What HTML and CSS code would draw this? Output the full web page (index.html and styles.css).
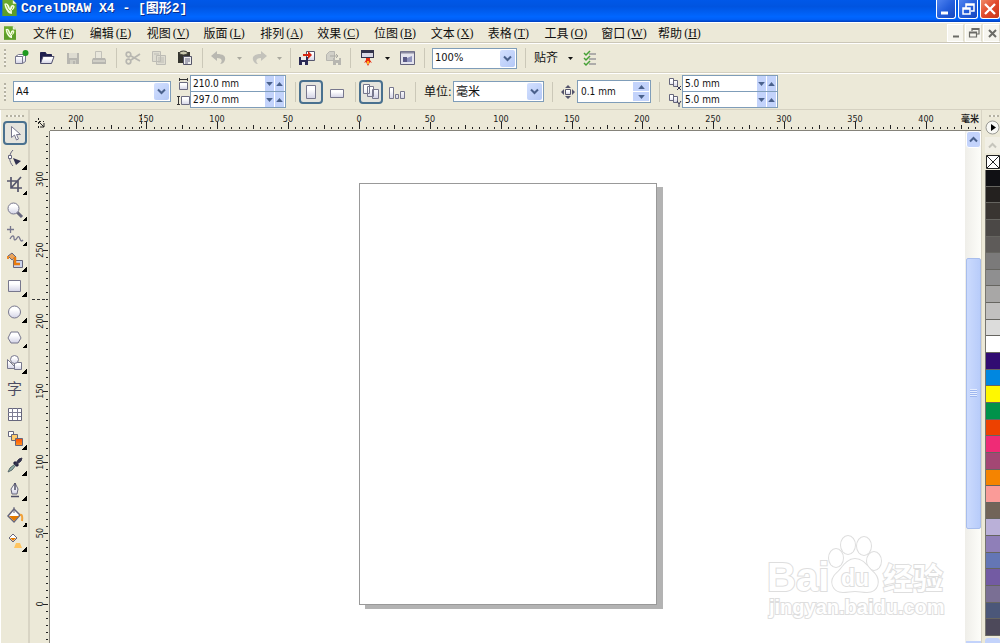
FILE: index.html
```html
<!DOCTYPE html>
<html lang="zh-CN">
<head>
<meta charset="utf-8">
<title>CorelDRAW X4 - [图形2]</title>
<link rel="stylesheet" href="styles.css">
</head>
<body>
<svg class="defs" aria-hidden="true">
  <defs>
    <linearGradient id="pale" x1="0" y1="0" x2="0" y2="1"><stop offset=".3" stop-color="#fff"/><stop offset="1" stop-color="#d3d3e6"/></linearGradient>
    <linearGradient id="hot" x1="0" y1="0" x2="0" y2="1"><stop offset="0" stop-color="#ff4a00"/><stop offset="1" stop-color="#ff9420"/></linearGradient>
    <symbol id="down" viewBox="0 0 9 9"><path d="M1 2.500 4.500 6 8 2.500" fill="none" stroke="#4a618c" stroke-width="2"/></symbol>
    <symbol id="tri" viewBox="0 0 5 3"><path d="M0 0h5L2.500 3z" fill="currentColor"/></symbol>
    <symbol id="triup" viewBox="0 0 5 3"><path d="M0 3h5L2.500 0z" fill="currentColor"/></symbol>
    <symbol id="logo" viewBox="0 0 15 17"><path d="M0 0h11l4 4v13H0z" fill="#6aa92c"/><path d="M0 9h15v8H0z" fill="#4f9426" opacity=".5"/><path d="M11 0l4 4h-4z" fill="#f1f5e6"/><path d="M2 4q3-2 5 2l1 3 1-3q3-2 4 1-1 4-3 4v4l-3-1q-4-3-5-10z" fill="#f7ffe8"/><path d="M4 5q1 4 4 7M11 7q0 2-2 4" fill="none" stroke="#86b735"/></symbol>
  </defs>
</svg>
<div class="app">
  <header class="titlebar">
    <svg class="title-logo"><use href="#logo"/></svg>
    <h1>CorelDRAW X4 - [图形2]</h1>
    <div class="window-buttons">
      <button aria-label="最小化"><svg width="18" height="18"><path d="M4 13h7" stroke="#fff" stroke-width="3"/></svg></button>
      <button aria-label="还原"><svg width="18" height="18"><path d="M7 8V4h8v7h-3M7 5h8" fill="none" stroke="#fff" stroke-width="1.500"/><path d="M4 8h7v6H4zM4 9h7" fill="none" stroke="#fff" stroke-width="1.500"/></svg></button>
      <button class="close" aria-label="关闭"><svg width="18" height="18"><path d="M4 4l10 10M14 4L4 14" stroke="#fff" stroke-width="2.300"/></svg></button>
    </div>
  </header>

  <nav class="menubar">
    <svg class="doc-logo"><use href="#logo"/></svg>
    <div class="menus">
      <button class="menu">文件<span>(<u>F</u>)</span></button>
      <button class="menu">编辑<span>(<u>E</u>)</span></button>
      <button class="menu">视图<span>(<u>V</u>)</span></button>
      <button class="menu">版面<span>(<u>L</u>)</span></button>
      <button class="menu">排列<span>(<u>A</u>)</span></button>
      <button class="menu">效果<span>(<u>C</u>)</span></button>
      <button class="menu">位图<span>(<u>B</u>)</span></button>
      <button class="menu">文本<span>(<u>X</u>)</span></button>
      <button class="menu">表格<span>(<u>T</u>)</span></button>
      <button class="menu">工具<span>(<u>O</u>)</span></button>
      <button class="menu">窗口<span>(<u>W</u>)</span></button>
      <button class="menu">帮助<span>(<u>H</u>)</span></button>
    </div>
    <div class="doc-buttons">
      <button aria-label="最小化文档"><svg width="16" height="16"><path d="M5 11.500h6" stroke="#6b6b66" stroke-width="2"/></svg></button>
      <button aria-label="还原文档"><svg width="16" height="16"><path d="M6 6V3.500h7V9h-2M6 4.500h7M3.500 7h7v5h-7zM4 8h6" fill="none" stroke="#6b6b66" stroke-width="1.200"/></svg></button>
      <button aria-label="关闭文档"><svg width="16" height="16"><path d="M5 5l7 7M12 5l-7 7" stroke="#6b6b66" stroke-width="2"/></svg></button>
    </div>
  </nav>

  <div class="toolbar" role="toolbar" aria-label="标准">
    <i class="grip"></i>
    <button class="tool" aria-label="新建"><svg width="18" height="18"><path d="M3.500 7.500l3-2h7v7l-3 2h-7z" fill="url(#pale)" stroke="#77778d"/><path d="M3.500 7.500h7v7M10.500 7.500l3-2" fill="none" stroke="#77778d"/><circle cx="13.500" cy="4" r="3" fill="#1f9a1f"/></svg></button>
    <button class="tool" aria-label="打开"><svg width="18" height="18"><path d="M2.500 14V3.500h5l1 2h5V8" fill="#20204e" stroke="#20204e"/><path d="M2.500 14.500L5 7.500h11l-2.500 7z" fill="url(#pale)" stroke="#50506d"/></svg></button>
    <button class="tool" aria-label="保存"><svg width="18" height="18" fill="#b7b6b0"><path d="M3 4h12v11H3z"/><path d="M5 4h8v5H5z" fill="#dedcd1"/><path d="M6 11h6v4H6z" fill="#cecdc4"/><path d="M9 12h2v3H9z"/></svg></button>
    <button class="tool" aria-label="打印"><svg width="18" height="18"><path d="M5.500 9V2.500h6V9" fill="#e9e7dc" stroke="#c2c1b9"/><path d="M3 9h12l1 2v4H2v-4z" fill="#b7b6b0"/><path d="M3 12h12" stroke="#e9e7dc"/></svg></button>
    <i class="sep"></i>
    <button class="tool" aria-label="剪切"><svg width="18" height="18" fill="none" stroke="#b7b6b0" stroke-width="1.700"><path d="M7 7l9 5M7 11l9-6"/><circle cx="4.500" cy="5.500" r="2.300"/><circle cx="4.500" cy="12.500" r="2.300"/></svg></button>
    <button class="tool" aria-label="复制"><svg width="18" height="18" fill="#dedcd1" stroke="#bdbcb5"><path d="M2.500 2.500h8v10h-8zM6.500 6.500h9v9h-9zM8 9h6M8 11h6M8 13h6M4 5h5"/></svg></button>
    <button class="tool" aria-label="粘贴"><svg width="18" height="18"><path d="M2 3h12v11H2z" fill="#35352f"/><ellipse cx="7.500" cy="4" rx="4" ry="2" fill="#c9c7ad" stroke="#35352f"/><path d="M7.500 7.500h8v8h-8z" fill="#eee" stroke="#555568"/><path d="M9 10h5M9 12h5M9 14h3" stroke="#666680"/></svg></button>
    <i class="sep"></i>
    <button class="tool" aria-label="撤销"><svg width="18" height="18"><path d="M1 7l6-5v3c6 0 9 2 8 6-1 3-3 4-5 4 3-3 2-6-3-6v3z" fill="#b9b8b1"/></svg></button>
    <button class="caret off" aria-label="撤销列表"><svg width="5" height="3"><use href="#tri"/></svg></button>
    <button class="tool" aria-label="重做"><svg width="18" height="18"><path d="M17 7l-6-5v3c-6 0-9 2-8 6 1 3 3 4 5 4-3-3-2-6 3-6v3z" fill="#c3c2bb"/></svg></button>
    <button class="caret off" aria-label="重做列表"><svg width="5" height="3"><use href="#tri"/></svg></button>
    <i class="sep"></i>
    <button class="tool" aria-label="导入"><svg width="18" height="18"><path d="M8.500 2.500h8v9h-8z" fill="url(#pale)" stroke="#56566e"/><path d="M1 8h9v8H1z" fill="#2b2b55"/><path d="M3 8h5v3H3zM4 13h3v3H4z" fill="#eee"/><path d="M5 6h6" stroke="#d52512" stroke-width="2"/><path d="M10 2l4 4-4 4z" fill="#d52512"/></svg></button>
    <button class="tool" aria-label="导出"><svg width="18" height="18"><path d="M2.500 5.500l3-3h5v9h-8z" fill="#d1d0c8" stroke="#b7b6b0"/><path d="M9 9h8v7H9z" fill="#b7b6b0"/><path d="M11 9h4v2h-4zM12 14h2v2h-2z" fill="#ecead9"/><path d="M6 7h8M12 5l2 2-2 2" stroke="#aaa9a2" fill="none"/></svg></button>
    <i class="sep"></i>
    <button class="tool" aria-label="应用程序启动器"><svg width="18" height="18"><path d="M3 1h13v8H3z" fill="#34344a"/><path d="M4 4h11v4H4z" fill="#d9d9e5"/><path d="M8 9h4v2l2 3-2-1-2 4-2-4-2 1 2-3z" fill="#e92c10"/><path d="M9 12h2v3H9z" fill="#ffb21e"/></svg></button>
    <button class="caret" aria-label="启动器列表"><svg width="5" height="3"><use href="#tri"/></svg></button>
    <button class="tool" aria-label="欢迎屏幕"><svg width="18" height="18"><path d="M2.500 2.500h14v13h-14z" fill="#e4e4ee" stroke="#63637c"/><path d="M3 3.500h13" stroke="#8a8aa0" stroke-width="2"/><path d="M5 13V8h4v5z" fill="#5a5a87"/><path d="M9 13V9l5-2v6z" fill="#8f93bd"/></svg></button>
    <i class="sep"></i>
    <div class="combo zoom"><select aria-label="缩放级别"><option>100%</option></select><span class="combo-arrow"><svg width="9" height="9"><use href="#down"/></svg></span></div>
    <i class="sep"></i>
    <button class="snap">贴齐</button>
    <button class="caret" aria-label="贴齐列表"><svg width="5" height="3"><use href="#tri"/></svg></button>
    <button class="tool" aria-label="选项"><svg width="18" height="18" fill="none"><path d="M8 5h7M8 10h7M8 15h7" stroke="#70707c"/><path d="M3 4l2 2 4-4M3 9l2 2 4-4M3 14l2 2 4-4" stroke="#45a035" stroke-width="1.500"/></svg></button>
  </div>

  <div class="toolbar props" role="toolbar" aria-label="属性栏">
    <i class="grip"></i>
    <div class="combo paper"><select aria-label="纸张类型"><option>A4</option></select><span class="combo-arrow"><svg width="9" height="9"><use href="#down"/></svg></span></div>
    <div class="pair-icons">
      <svg width="14" height="14"><path d="M3.500 5.500h8v7h-8z" fill="url(#pale)" stroke="#6b6b80"/><path d="M3 2.500h9M3.500 1v3M11.500 1v3" stroke="#333"/></svg>
      <svg width="14" height="14"><path d="M5.500 3.500h8v8h-8z" fill="url(#pale)" stroke="#6b6b80"/><path d="M2.500 3v9M1 3.500h3M1 11.500h3" stroke="#333"/></svg>
    </div>
    <div class="pair">
      <div class="spin"><input aria-label="纸张宽度" value="210.0 mm"><button aria-label="减少宽度"><svg width="7" height="4"><use href="#tri"/></svg></button><button aria-label="增加宽度"><svg width="7" height="4"><use href="#triup"/></svg></button></div>
      <div class="spin"><input aria-label="纸张高度" value="297.0 mm"><button aria-label="减少高度"><svg width="7" height="4"><use href="#tri"/></svg></button><button aria-label="增加高度"><svg width="7" height="4"><use href="#triup"/></svg></button></div>
    </div>
    <i class="sep"></i>
    <button class="tool on" aria-label="纵向"><svg width="18" height="18"><path d="M4.500 2.500h9v13h-9z" fill="url(#pale)" stroke="#77778d"/></svg></button>
    <button class="tool" aria-label="横向"><svg width="18" height="18"><path d="M2.500 6.500h13v8h-13z" fill="url(#pale)" stroke="#77778d"/></svg></button>
    <i class="sep"></i>
    <button class="tool on" aria-label="所有页面"><svg width="18" height="18" fill="url(#pale)" stroke="#77778d"><path d="M1.500 1.500h6v9h-6zM5.500 3.500h6v10h-6zM10.500 6.500h6v9h-6z"/></svg></button>
    <button class="tool" aria-label="当前页面"><svg width="18" height="18" fill="url(#pale)" stroke="#77778d"><path d="M1.500 4.500h4v11h-4zM7.500 11.500h3v4h-3zM12.500 8.500h4v7h-4z"/></svg></button>
    <i class="sep"></i>
    <label class="unit-label" for="unit">单位:</label>
    <div class="combo unit"><select id="unit"><option>毫米</option></select><span class="combo-arrow"><svg width="9" height="9"><use href="#down"/></svg></span></div>
    <i class="sep"></i>
    <svg class="nudge-icon" width="14" height="14"><path d="M4.500 4.500h5v5h-5z" fill="url(#pale)" stroke="#55556c"/><path d="M7 0l3 3H4zM7 14l3-3H4zM0 7l3-3v6zM14 7l-3-3v6z" fill="#55556c"/></svg>
    <div class="spin nudge"><input aria-label="微调偏移" value="0.1 mm"><div class="stack"><button aria-label="增加偏移"><svg width="7" height="4"><use href="#triup"/></svg></button><button aria-label="减少偏移"><svg width="7" height="4"><use href="#tri"/></svg></button></div></div>
    <i class="sep"></i>
    <div class="pair-icons">
      <svg width="14" height="14"><path d="M1.500 1.500h4v6h-4zM5.500 3.500h4v6h-4z" fill="url(#pale)" stroke="#66667c"/><path d="M9 9l4 4M13 9l-4 4" stroke="#333355"/></svg>
      <svg width="14" height="14"><path d="M1.500 1.500h4v6h-4zM5.500 3.500h4v6h-4z" fill="url(#pale)" stroke="#66667c"/><path d="M9 8l2 3 2-3M11 11v3" fill="none" stroke="#333355"/></svg>
    </div>
    <div class="pair">
      <div class="spin"><input aria-label="再制距离 X" value="5.0 mm"><button aria-label="减少 X"><svg width="7" height="4"><use href="#tri"/></svg></button><button aria-label="增加 X"><svg width="7" height="4"><use href="#triup"/></svg></button></div>
      <div class="spin"><input aria-label="再制距离 Y" value="5.0 mm"><button aria-label="减少 Y"><svg width="7" height="4"><use href="#tri"/></svg></button><button aria-label="增加 Y"><svg width="7" height="4"><use href="#triup"/></svg></button></div>
    </div>
  </div>

  <main class="workspace">
    <aside class="toolbox" aria-label="工具箱">
      <i class="grip-h"></i>
      <div class="tools">
        <button class="on" aria-label="挑选"><svg width="20" height="20"><path d="M6.500 3.500v11l3-2.500 2 5 2-1-2-4.500h4z" fill="#fff" stroke="#77778d"/></svg></button>
        <button class="fly" aria-label="形状"><svg width="20" height="20"><path d="M8 1C3 6 4 13 8 17" fill="none" stroke="#67677f"/><path d="M3.500 6.500h3v3h-3z" fill="#fff" stroke="#67677f"/><path d="M8 9l8 3-5 4z" fill="#30304f"/></svg></button>
        <button class="fly" aria-label="裁剪"><svg width="20" height="20"><path d="M2 7h11v11M6 3v11h11M16 3L6 14" fill="none" stroke="#55556c" stroke-width="1.700"/></svg></button>
        <button class="fly" aria-label="缩放"><svg width="20" height="20"><path d="M12 12l5 5" stroke="#66667e" stroke-width="3"/><circle cx="8.500" cy="8.500" r="5.500" fill="url(#pale)" stroke="#77778d"/></svg></button>
        <button class="fly" aria-label="手绘"><svg width="20" height="20"><path d="M5.500 1v7M2 4.500h7M5 14c2-4 4-4 4-1s2 2 3 0 2-2 3 1 2 2 3 1" fill="none" stroke="#77778d" stroke-width="1.300"/></svg></button>
        <button class="fly" aria-label="智能填充"><svg width="20" height="20"><path d="M3 5l4-3 4 4-4 3z" fill="#e9a45c" stroke="#66667c"/><path d="M3 5v3" stroke="#e9892b" stroke-width="2"/><path d="M8.500 9.500h9v7h-9z" fill="#ccd4ed" stroke="#66667c"/><path d="M10 6v7h5" fill="none" stroke="#e97b0d" stroke-width="2.500"/></svg></button>
        <button class="fly" aria-label="矩形"><svg width="20" height="20"><path d="M3.500 4.500h12v11h-12z" fill="url(#pale)" stroke="#77778d"/></svg></button>
        <button class="fly" aria-label="椭圆形"><svg width="20" height="20"><circle cx="9.500" cy="10" r="6" fill="url(#pale)" stroke="#77778d"/></svg></button>
        <button class="fly" aria-label="多边形"><svg width="20" height="20"><path d="M6 5h7l3 6-3 5H6l-3-5z" fill="url(#pale)" stroke="#77778d"/></svg></button>
        <button class="fly" aria-label="基本形状"><svg width="20" height="20" fill="url(#pale)" stroke="#77778d"><path d="M2.500 6.500v9h9z"/><path d="M9.500 9.500h7v7h-7z"/><circle cx="9.500" cy="6.500" r="4"/></svg></button>
        <button class="text-tool" aria-label="文本">字</button>
        <button aria-label="表格"><svg width="20" height="20"><path d="M3.500 4.500h13v12h-13z" fill="#fff" stroke="#66667c"/><path d="M3 8.500h13M3 12.500h13M7.500 4v12M12.500 4v12" stroke="#7d7d94"/></svg></button>
        <button class="fly" aria-label="交互式调和"><svg width="20" height="20" stroke="#66667c"><path d="M3.500 2.500h5v5h-5z" fill="#fff"/><path d="M6.500 5.500h6v6h-6z" fill="#ffcb69"/><path d="M10.500 9.500h7v7h-7z" fill="url(#hot)"/></svg></button>
        <button class="fly" aria-label="滴管"><svg width="20" height="20"><path d="M3 17l2-4 5-4 1 1-4 5z" fill="#8fb1a7" stroke="#56666a"/><path d="M9 7l4 4" stroke="#23233e" stroke-width="3"/><path d="M10 9l4-5 3-1-1 3-5 4z" fill="#34344e" stroke="#34344e"/></svg></button>
        <button class="fly" aria-label="轮廓"><svg width="20" height="20"><path d="M10 3l3 6-1 5H7L6 9z" fill="url(#pale)" stroke="#66667c"/><path d="M10 3v7M6 16.500h8" stroke="#4d4d65" stroke-width="1.500"/></svg></button>
        <button class="fly" aria-label="填充"><svg width="20" height="20"><path d="M9 3l6 6-6 7-6-6z" fill="#fff" stroke="#66667c" stroke-width="1.500"/><path d="M4 10h10l-5 5z" fill="#e47a00"/><path d="M9 1v6" stroke="#66667c"/><path d="M15 9q3-1 2 6" fill="none" stroke="#f1a23a" stroke-width="2"/></svg></button>
        <button class="fly" aria-label="交互式填充"><svg width="20" height="20"><path d="M8 3l4 4-4 4-4-4z" fill="#fff" stroke="#66667c"/><path d="M5 7h6l-3 3z" fill="#e47a00"/><path d="M11 12h4l2 5H9z" fill="#ffc45e"/></svg></button>
      </div>
    </aside>

    <section class="document">
      <div class="corner"><svg width="12" height="12"><path d="M4.500 1v10M1 4.500h9" stroke="#222" stroke-dasharray="2 2"/><path d="M5 5l5 5M10 6v4H6" fill="none" stroke="#222"/></svg></div>
      <svg class="ruler ruler-x" id="ruler-x"></svg>
      <svg class="ruler ruler-y" id="ruler-y"></svg>
      <div class="canvas">
        <div class="page"></div>
        <svg class="watermark" width="184" height="90" aria-label="Baidu 经验">
          <g fill="#fff" stroke="#dedede" stroke-width="2" paint-order="stroke">
            <text class="wm-latin" x="2" y="58" font-size="40">Bai</text>
            <ellipse cx="71" cy="25" rx="7" ry="9"/><ellipse cx="83" cy="12" rx="7" ry="9"/><ellipse cx="99" cy="13" rx="7" ry="9"/><ellipse cx="109" cy="28" rx="7" ry="9"/>
            <path d="M90 26c-9 0-13 10-18 14-9 8-4 19 6 19 5 0 7-1 12-1s7 1 12 1c11 0 14-11 7-19-6-5-10-14-19-14z"/>
            <text class="wm-latin" x="76" y="53" font-size="23">du</text>
            <text class="wm-cjk" x="118" y="56" font-size="30">经验</text>
            <text class="wm-latin" x="4" y="81" font-size="20">jingyan.baidu.com</text>
          </g>
        </svg>
      </div>
      <div class="scrollbar">
        <button class="scroll-btn" aria-label="向上滚动"><svg width="9" height="9"><path d="M1 6.500L4.500 3 8 6.500" fill="none" stroke="#4a618c" stroke-width="2"/></svg></button>
        <div class="track"><div class="thumb"><i></i></div></div>
        <button class="scroll-end" aria-label="向下滚动"></button>
      </div>
    </section>

    <aside class="palette" aria-label="调色板">
      <i class="grip-h"></i>
      <button class="round" aria-label="调色板菜单"><svg width="15" height="15"><circle cx="7.500" cy="7.500" r="6.500" fill="#f8f8f4" stroke="#9b9b95"/><path d="M6 4l5 3.500L6 11z"/></svg></button>
      <button class="pal-up" aria-label="向上"><svg width="9" height="9"><path d="M1 6.500L4.500 3 8 6.500" fill="none" stroke="#c6c5bc" stroke-width="2"/></svg></button>
      <button class="none" aria-label="无填充"><svg width="14" height="14"><path d="M.5.500h13v13H.5zM1 1l12 12M13 1L1 13" fill="#fff" stroke="#222"/></svg></button>
      <div class="swatches" id="swatches"></div>
      <button class="pal-down" aria-label="向下"></button>
    </aside>
  </main>
</div>
<script src="app.js"></script>
</body>
</html>
```
FILE: styles.css
```css
* { box-sizing: border-box; }
body {
  margin: 0;
  font: 12px/16px "DejaVu Sans Condensed", "Noto Sans CJK SC", sans-serif;
  color: #111;
}
button {
  padding: 0;
  border: 0;
  background: none;
  font: inherit;
  color: inherit;
  display: flex;
  align-items: center;
  justify-content: center;
  flex: none;
}
svg { display: block; flex: none; }
.defs { position: absolute; width: 0; height: 0; }
.app {
  height: 100vh;
  display: flex;
  flex-direction: column;
  overflow: hidden;
  background: #ece9d8;
}

/* Title bar */
.titlebar {
  flex: none;
  height: 22px;
  display: flex;
  align-items: flex-start;
  background: linear-gradient(#0058e8, #0054e0 30%, #0066ff 75%, #0060f8 88%, #003dba);
}
.title-logo { width: 15px; height: 16px; margin: 0 4px 0 2px; }
.titlebar h1 {
  margin: 0;
  flex: 1;
  font: bold 13px/17px "Liberation Mono", "Noto Sans CJK SC", monospace;
  color: #fff;
  text-shadow: 1px 1px #0a2f8c;
}
.window-buttons { display: flex; gap: 2px; }
.window-buttons button {
  width: 20px;
  height: 19px;
  border: 1px solid #fff;
  border-top: 0;
  border-radius: 0 0 3px 3px;
  background: linear-gradient(135deg, #4f83f0, #245edb 50%, #1746bd);
}
.window-buttons .close { background: linear-gradient(135deg, #f08a68, #e0482a 50%, #c8371b); }

/* Menu bar */
.menubar {
  flex: none;
  height: 21px;
  display: flex;
  align-items: center;
  border-top: 1px solid #fff;
  border-bottom: 1px solid #cbc7b8;
}
.doc-logo { width: 12px; height: 16px; margin: 0 17px 0 4px; }
.menus { display: flex; width: 682px; }
.menu {
  flex: 1;
  justify-content: flex-start;
  gap: 2px;
  font: 12px/18px "Noto Sans CJK SC", sans-serif;
}
.menu span { font: 12px/18px "Liberation Serif", serif; }
.doc-buttons { margin-left: auto; display: flex; gap: 1px; }
.doc-buttons button { width: 17px; height: 18px; background: #f6f5ee; border: 1px solid #fff; border-right-color: #dedbcd; }

/* Toolbars */
.toolbar {
  flex: none;
  height: 30px;
  display: flex;
  align-items: center;
  border-top: 1px solid #fff;
  border-bottom: 1px solid #d5d1c1;
}
.grip {
  flex: none;
  width: 2px;
  height: 18px;
  margin: 0 2px 0 4px;
  background: repeating-linear-gradient(#b5b2a3 0 2px, #f5f3e9 2px 4px);
}
.sep { flex: none; width: 8px; height: 20px; background: linear-gradient(#cbc8b8, #cbc8b8) 4px 0 / 1px 100% no-repeat; }
.tool { width: 26px; height: 24px; }
.tool.on { width: 24px; border: 2px solid #4a718f; border-radius: 4px; background: #e5e4dd; }
.caret { width: 14px; height: 20px; }
.caret.off { color: #aaa99f; }
.combo { display: grid; height: 21px; flex: none; }
.combo select {
  grid-area: 1 / 1;
  appearance: none;
  width: 100%;
  height: 100%;
  padding: 0 2px;
  border: 1px solid #7f9db9;
  border-radius: 0;
  background: #fff;
  font: 11px/16px "DejaVu Sans Condensed", "Noto Sans CJK SC", sans-serif;
  color: #111;
}
.combo-arrow {
  grid-area: 1 / 1;
  justify-self: end;
  width: 15px;
  margin: 2px;
  display: flex;
  align-items: center;
  justify-content: center;
  border-radius: 2px;
  background: linear-gradient(135deg, #d3e0ff, #b4c8f6);
  pointer-events: none;
}
.zoom { width: 85px; margin: 0 4px; }
.snap { width: 24px; margin: 0 5px; }
.props { height: 37px; }
.paper { width: 158px; margin-left: 5px; }
.unit { width: 91px; margin-right: 4px; }
.unit select, .unit-label { font-size: 12px; }
.unit-label { width: 29px; margin-left: 5px; white-space: nowrap; }
.pair-icons { width: 14px; margin: 0 0 0 5px; display: flex; flex-direction: column; gap: 2px; }
.pair { width: 96px; flex: none; border: 1px solid #7f9db9; margin-right: 5px; }
.spin { display: flex; height: 15px; background: #fff; gap: 1px; padding-right: 1px; }
.spin + .spin { height: 16px; border-top: 1px solid #7f9db9; }
.spin input {
  flex: 1;
  min-width: 0;
  border: 0;
  padding: 0 2px;
  background: none;
  font: 10px/14px "DejaVu Sans Condensed", sans-serif;
  color: #111;
}
.spin button { width: 9px; background: #c3d3fb; color: #4a618c; }
.spin.nudge { width: 74px; height: 23px; padding: 1px; border: 1px solid #7f9db9; margin-right: 4px; }
.nudge-icon { margin: 0 2px 0 5px; }
.stack { display: flex; flex-direction: column; gap: 1px; }
.stack button { width: 16px; flex: 1; }
.props .tool.on { margin-right: 1px; }
.props .tool.on + .tool { margin-right: 1px; }

/* Workspace */
.workspace { flex: 1; min-height: 0; display: flex; }
.toolbox { flex: none; width: 30px; border-left: 1px solid #fff; border-right: 2px solid #d8d4c4; display: flex; flex-direction: column; align-items: center; }
.grip-h {
  flex: none;
  width: 18px;
  height: 2px;
  margin: 5px 0 4px;
  background: repeating-linear-gradient(90deg, #b5b2a3 0 2px, #f5f3e9 2px 4px);
}
.tools { height: 432px; display: flex; flex-direction: column; justify-content: space-between; }
.tools button { width: 24px; height: 24px; }
.tools .on { border: 2px solid #4a718f; border-radius: 4px; background: #e5e4dd; }
.tools .fly { background: linear-gradient(135deg, transparent 50%, #000 50%) right 18px / 5px 5px no-repeat; }
.tools .text-tool { font: 15px/20px "Noto Sans CJK SC", sans-serif; color: #4c4c62; }
.document {
  flex: 1;
  min-width: 0;
  display: grid;
  grid-template: 21px minmax(0, 1fr) / 20px minmax(0, 1fr) 16px;
}
.corner { display: flex; align-items: center; justify-content: center; padding-top: 4px; }
.ruler { width: 100%; height: 100%; font: 9px "DejaVu Sans Condensed", sans-serif; fill: #222; }
.ruler-x { grid-column: 2 / 4; border-bottom: 1px solid #85837a; }
.ruler-y { border-right: 1px solid #85837a; }
.ruler .unit-text { font: bold 9px "Noto Sans CJK SC", sans-serif; }
.canvas { position: relative; overflow: hidden; background: #fff; }
.page {
  position: absolute;
  left: 309px;
  top: 52px;
  width: 298px;
  height: 422px;
  border: 1px solid #999;
  background: #fff;
  box-shadow: 6px 4px #b3b3b3;
}
.watermark { position: absolute; right: 16px; bottom: 20px; }
.wm-latin { font-family: "Liberation Sans", sans-serif; font-weight: bold; }
.wm-cjk { font-family: "Noto Sans CJK SC", sans-serif; font-weight: bold; }
.scrollbar { display: flex; flex-direction: column; background: linear-gradient(90deg, #efeee9, #fdfdf9); }
.scroll-btn { width: 15px; height: 17px; margin-left: 1px; border: 1px solid #fff; border-radius: 3px; background: #c3d3fb; }
.scroll-end { width: 15px; height: 2px; margin-left: 1px; background: #c3d3fb; }
.track { flex: 1; min-height: 0; display: grid; grid-template-rows: 110fr 272fr 112fr; }
.thumb {
  grid-row: 2;
  width: 15px;
  margin-left: 1px;
  display: flex;
  align-items: center;
  justify-content: center;
  border: 1px solid #a8bdec;
  border-radius: 2px;
  background: linear-gradient(90deg, #cbdafd, #b8ccfa);
}
.thumb i { width: 7px; height: 8px; background: repeating-linear-gradient(#e6eeff 0 1px, #9eb6ef 1px 2px); }

/* Colour palette */
.palette { flex: none; width: 19px; padding-left: 3px; border-left: 1px solid #d8d4c4; display: flex; flex-direction: column; }
.palette .grip-h { width: 10px; margin: 5px 0 2px 4px; }
.round { width: 15px; height: 17px; }
.pal-up { width: 15px; height: 16px; margin: 1px 0; background: #f1efe5; }
.none { width: 15px; height: 16px; }
.swatches { flex: 1; min-height: 0; display: flex; flex-direction: column; border-left: 1px solid #77766f; }
.swatch { flex: 1; border-bottom: 1px solid #666560; }
.pal-down { height: 5px; margin-top: 2px; border-radius: 3px 3px 0 0; background: #c3d3fb; }
```
FILE: app.js
```js
const NS = 'http://www.w3.org/2000/svg';
const PX_PER_MM = 1.4168;

function add(parent, tag, attrs, text) {
  const el = document.createElementNS(NS, tag);
  for (const key in attrs) el.setAttribute(key, attrs[key]);
  if (text !== undefined) el.textContent = text;
  parent.appendChild(el);
}

function tickLength(mm) {
  if (mm % 50 === 0) return 7;
  return mm % 25 === 0 ? 4 : 2;
}

const rx = document.getElementById('ruler-x');
const originX = 309;
for (let mm = -215; mm <= 435; mm += 5) {
  const x = Math.round(originX + mm * PX_PER_MM);
  const len = tickLength(mm);
  add(rx, 'rect', { x: x, y: 19 - len, width: 1, height: len });
  if (mm % 50 === 0) add(rx, 'text', { x: x, y: 12, 'text-anchor': 'middle' }, Math.abs(mm));
}
add(rx, 'text', { x: 911, y: 12, class: 'unit-text' }, '毫米');
add(rx, 'path', { d: 'M91.500 4v16', stroke: '#333', 'stroke-dasharray': '2 2' });

const ry = document.getElementById('ruler-y');
const originY = 473;
for (let mm = -25; mm <= 330; mm += 5) {
  const y = Math.round(originY - mm * PX_PER_MM);
  const len = tickLength(mm) === 7 ? 5 : 2;
  add(ry, 'rect', { x: 18 - len, y: y, width: len, height: 1 });
  if (mm % 50 === 0) {
    add(ry, 'text', { transform: `translate(13 ${y}) rotate(-90)`, 'text-anchor': 'middle' }, mm);
  }
}
add(ry, 'path', { d: 'M2 168.500h16', stroke: '#333', 'stroke-dasharray': '3 2' });

const colors = ['#101014', '#24211f', '#393531', '#4b4846', '#5e5b59', '#7b7a7a', '#8f8f90', '#a8a7a6',
  '#c1c0bf', '#dcdcdb', '#ffffff', '#310c72', '#0087e0', '#fff800', '#00924a', '#ed4100', '#ef2b76',
  '#a34774', '#f58400', '#fa9b98', '#716459', '#bab0d8', '#8f7fb8', '#6476b5', '#735ba3', '#7a6f94',
  '#4b5779', '#4d495a'];
const swatches = document.getElementById('swatches');
for (const color of colors) {
  const button = document.createElement('button');
  button.className = 'swatch';
  button.style.backgroundColor = color;
  button.setAttribute('aria-label', color);
  swatches.appendChild(button);
}
```
